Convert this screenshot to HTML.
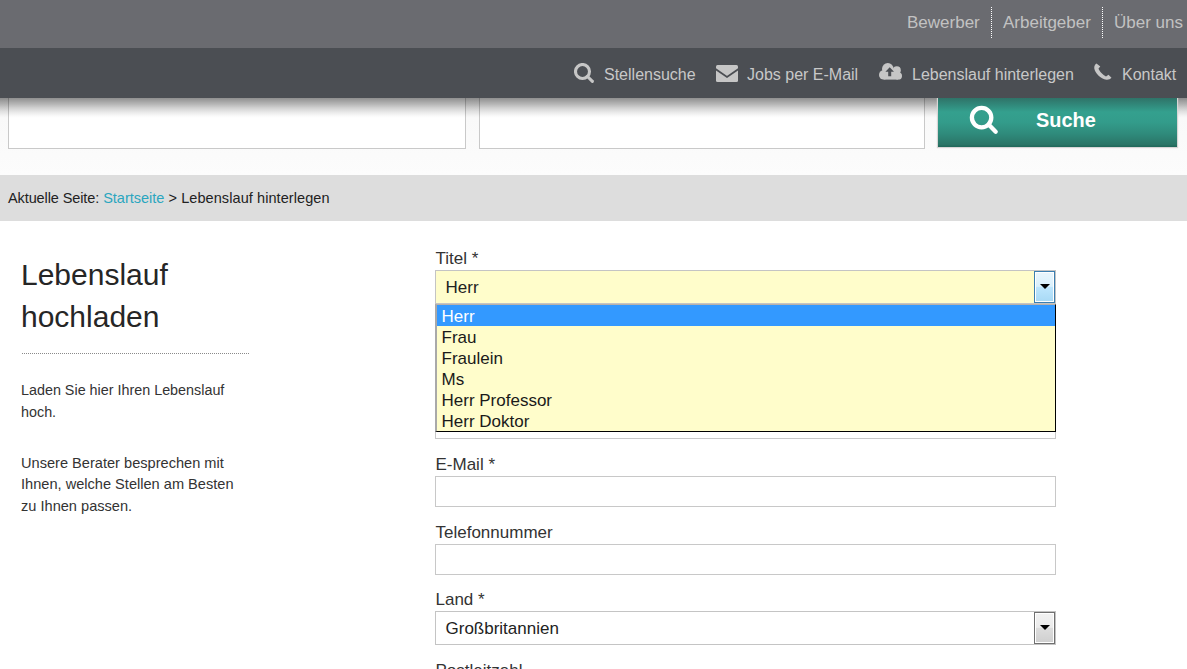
<!DOCTYPE html>
<html>
<head>
<meta charset="utf-8">
<style>
* { box-sizing: border-box; margin: 0; padding: 0; }
html, body { width: 1187px; height: 669px; overflow: hidden; background: #fff; }
body { font-family: "Liberation Sans", sans-serif; color: #333; position: relative; }
.abs { position: absolute; }
#top { left: 0; top: 0; width: 1187px; height: 48px; background: #6a6b70; }
#top .item { position: absolute; top: 1px; height: 48px; line-height: 44px; font-size: 17px; color: #c2c2c2; white-space: nowrap; }
#top .sep { position: absolute; top: 7px; height: 31px; width: 0; border-left: 1px dotted #ffffff; }
#nav { left: 0; top: 48px; width: 1187px; height: 50px; background: #4b4e53; z-index: 10; }
#shadow { left: 0; top: 98px; width: 1187px; height: 20px; z-index: 6; background: linear-gradient(rgba(0,0,0,0.44) 0px, rgba(0,0,0,0.29) 6px, rgba(0,0,0,0.18) 10px, rgba(0,0,0,0.09) 14px, rgba(0,0,0,0.02) 18px, rgba(0,0,0,0) 20px); }
#nav .item { position: absolute; top: 2px; height: 50px; line-height: 50px; font-size: 16px; color: #c8c8c8; white-space: nowrap; }
#nav svg { position: absolute; }
#search { left: 0; top: 98px; width: 1187px; height: 77px; background: linear-gradient(#f8f8f8, #fcfcfc); }
.sinput { position: absolute; background: #fff; border: 1px solid #c9c9c9; }
#btn { position: absolute; left: 938px; top: 90px; width: 239px; height: 57px; background: linear-gradient(#2d6a60 0px, #2f7368 8px, #31897b 15px, #34a08e 22px, #339c8b 32px, #2f8a7b 44px, #2a7466 55px, #226a5c 56px, #226a5c 57px); box-shadow: 0 0 1px 1px #d8d6d6; }
#btn .t { position: absolute; left: 98px; top: 19px; font-size: 19.9px; font-weight: bold; color: #fff; line-height: 22px; }
#crumb { left: 0; top: 175px; width: 1187px; height: 46px; background: #dddddd; font-size: 14.5px; line-height: 46px; padding-left: 8px; color: #222; white-space: nowrap; }
#crumb a { color: #2aa6bf; text-decoration: none; }
h1 { position: absolute; left: 21px; top: 254px; font-size: 30px; font-weight: normal; line-height: 42px; color: #262626; }
#hr { left: 22px; top: 353px; width: 227px; height: 0; border-top: 1px dotted #8a8a8a; }
.p { position: absolute; left: 21px; font-size: 14.55px; line-height: 21.4px; color: #333; white-space: nowrap; }
.lbl { position: absolute; left: 435.5px; font-size: 17px; line-height: 20px; color: #333; white-space: nowrap; }
.inp { position: absolute; left: 435px; width: 621px; height: 31px; border: 1px solid #c8c8c8; background: #fff; }
.sel { position: absolute; left: 435px; width: 621px; border: 1px solid #c4c4c4; background: #fff; }
.sel .v { position: absolute; left: 9.5px; font-size: 17px; color: #222; white-space: nowrap; }
.arr { position: absolute; right: 0px; top: 0px; width: 21px; }
#list { left: 435px; top: 304px; width: 621px; height: 128px; background: #fffdcb; border-top: 1px solid #b9b2ab; border-left: 2px solid #a9a9a9; border-right: 1px solid #000; border-bottom: 1px solid #000; z-index: 3; }
#list div { height: 21px; line-height: 23px; padding-left: 4.5px; font-size: 17px; color: #1a1a1a; white-space: nowrap; }
#list div.hl { background: #3399ff; color: #fff; }
</style>
</head>
<body>
<div id="top" class="abs">
  <div class="item" style="left:907px">Bewerber</div>
  <div class="sep" style="left:991px"></div>
  <div class="item" style="left:1003px">Arbeitgeber</div>
  <div class="sep" style="left:1102px"></div>
  <div class="item" style="left:1114px">Über uns</div>
</div>
<div id="nav" class="abs">
  <svg style="left:574px;top:15px" width="21" height="21" viewBox="0 0 21 21"><circle cx="8.5" cy="8.5" r="7" fill="none" stroke="#c6c6c6" stroke-width="3.1"/><line x1="13.5" y1="13.5" x2="18.4" y2="18.4" stroke="#c6c6c6" stroke-width="3.1" stroke-linecap="round"/></svg>
  <div class="item" style="left:604px">Stellensuche</div>
  <svg style="left:716px;top:17px" width="22" height="17" viewBox="0 0 22 17"><rect x="0" y="0" width="22" height="17" rx="1.5" fill="#c6c6c6"/><path d="M-0.5 4 L11 12 L22.5 4" fill="none" stroke="#4b4e53" stroke-width="1.7"/></svg>
  <div class="item" style="left:747px">Jobs per E-Mail</div>
  <svg style="left:879px;top:14.8px" width="24" height="17" viewBox="0 0 24 17"><g fill="#c6c6c6"><circle cx="4.7" cy="11.9" r="4.7"/><circle cx="8.8" cy="5.9" r="5.8"/><circle cx="17.8" cy="7.2" r="4"/><circle cx="19.3" cy="12.9" r="3.7"/><rect x="4.7" y="8" width="14.6" height="8.6"/></g><path d="M10.7 4.3 L15 8.8 L12.2 8.8 L12.2 13.2 L9.2 13.2 L9.2 8.8 L6.4 8.8 Z" fill="#4b4e53"/></svg>
  <div class="item" style="left:912px">Lebenslauf hinterlegen</div>
  <svg style="left:1094px;top:15px" width="18" height="17" viewBox="0 0 18 17"><path d="M2.5 0.5 C1 1.5 0 3 0.3 5.5 C1 10 6.5 16 12.5 16.8 C14.5 17 16.5 16 17.5 14.8 L14.5 11.8 L12 13.5 C9 12 5.5 8.5 4.5 5.5 L6.3 3.5 Z" fill="#c6c6c6"/></svg>
  <div class="item" style="left:1122px">Kontakt</div>
</div>
<div id="shadow" class="abs"></div>
<div id="search" class="abs">
  <div class="sinput" style="left:8px;top:-10px;width:458px;height:61px"></div>
  <div class="sinput" style="left:479px;top:-10px;width:446px;height:61px"></div>
</div>
<div id="btn" style="z-index:7">
  <svg style="position:absolute;left:31px;top:15px" width="31" height="31" viewBox="0 0 31 31"><circle cx="12.6" cy="12.6" r="9.7" fill="none" stroke="#fff" stroke-width="4.3"/><line x1="19.6" y1="19.6" x2="26.7" y2="26.7" stroke="#fff" stroke-width="4.3" stroke-linecap="round"/></svg>
  <div class="t">Suche</div>
</div>
<div id="crumb" class="abs"><span style="letter-spacing:-0.1px">Aktuelle Seite: </span><a>Startseite</a><span style="letter-spacing:0.08px"> &gt; Lebenslauf hinterlegen</span></div>

<h1>Lebenslauf<br>hochladen</h1>
<div id="hr" class="abs"></div>
<div class="p" style="top:378.5px;line-height:22px;font-size:14.35px">Laden Sie hier Ihren Lebenslauf<br>hoch.</div>
<div class="p" style="top:452.7px;font-size:14.6px">Unsere Berater besprechen mit<br>Ihnen, welche Stellen am Besten<br>zu Ihnen passen.</div>

<div class="lbl" style="top:249px">Titel *</div>
<div class="sel" style="top:270px;height:34px;background:#fffdcb">
  <div class="v" style="top:7px">Herr</div>
  <div style="position:absolute;left:598px;top:0px;width:21px;height:32px;border:1px solid #3c7fb1;background:linear-gradient(#eaf6fd 0%,#d9f0fc 48%,#bee6fd 50%,#a7d9f5 100%);box-shadow:inset 0 0 0 1px #fff"><div style="position:absolute;left:4.5px;top:12px;width:0;height:0;border-left:5px solid transparent;border-right:5px solid transparent;border-top:5px solid #000"></div></div>
</div>
<div class="lbl" style="top:387px">Name *</div>
<div class="inp" style="top:408px"></div>
<div id="list" class="abs">
  <div class="hl">Herr</div>
  <div>Frau</div>
  <div>Fraulein</div>
  <div>Ms</div>
  <div>Herr Professor</div>
  <div>Herr Doktor</div>
</div>
<div class="lbl" style="top:455px">E-Mail *</div>
<div class="inp" style="top:476px"></div>
<div class="lbl" style="top:523px">Telefonnummer</div>
<div class="inp" style="top:544px"></div>
<div class="lbl" style="top:590px">Land *</div>
<div class="sel" style="top:611px;height:34px">
  <div class="v" style="top:6.5px">Großbritannien</div>
  <div style="position:absolute;left:598px;top:0px;width:21px;height:32px;border:1px solid #707070;background:linear-gradient(#f2f2f2 0%,#ebebeb 48%,#dddddd 50%,#cfcfcf 100%);box-shadow:inset 0 0 0 1px #fff"><div style="position:absolute;left:4.5px;top:12px;width:0;height:0;border-left:5px solid transparent;border-right:5px solid transparent;border-top:5px solid #000"></div></div>
</div>
<div class="lbl" style="top:661px">Postleitzahl</div>
</body>
</html>
